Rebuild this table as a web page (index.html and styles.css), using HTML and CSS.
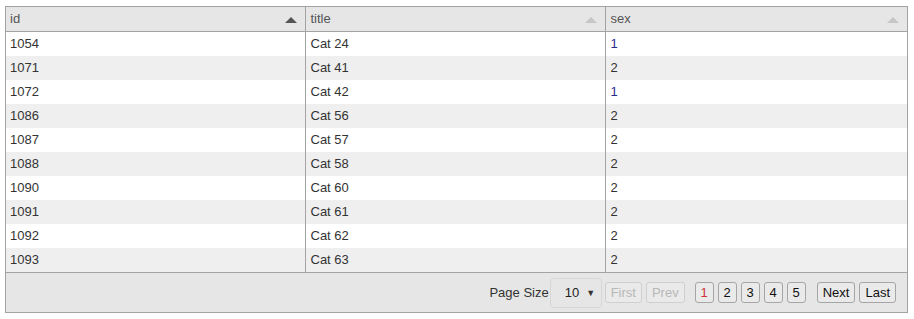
FILE: index.html
```html
<!DOCTYPE html>
<html>
<head>
<meta charset="utf-8">
<link rel="stylesheet" href="styles.css">
</head>
<body>
<div class="grid">
  <table class="tbl">
    <colgroup><col class="c1"><col class="c2"><col class="c3"></colgroup>
    <thead>
      <tr>
        <th><span class="hd">id</span><span class="sort sort-active"></span></th>
        <th><span class="hd">title</span><span class="sort"></span></th>
        <th><span class="hd">sex</span><span class="sort"></span></th>
      </tr>
    </thead>
    <tbody>
      <tr><td>1054</td><td>Cat 24</td><td><span class="one">1</span></td></tr>
      <tr><td>1071</td><td>Cat 41</td><td>2</td></tr>
      <tr><td>1072</td><td>Cat 42</td><td><span class="one">1</span></td></tr>
      <tr><td>1086</td><td>Cat 56</td><td>2</td></tr>
      <tr><td>1087</td><td>Cat 57</td><td>2</td></tr>
      <tr><td>1088</td><td>Cat 58</td><td>2</td></tr>
      <tr><td>1090</td><td>Cat 60</td><td>2</td></tr>
      <tr><td>1091</td><td>Cat 61</td><td>2</td></tr>
      <tr><td>1092</td><td>Cat 62</td><td>2</td></tr>
      <tr><td>1093</td><td>Cat 63</td><td>2</td></tr>
    </tbody>
  </table>
  <div class="pager">
    <span class="ps-label">Page Size</span>
    <span class="ps-select"><span class="ps-val">10</span><span class="caret">&#9660;</span></span>
    <button class="btn btn-first" disabled>First</button>
    <button class="btn btn-prev" disabled>Prev</button>
    <span class="pages">
      <button class="btn page current">1</button>
      <button class="btn page">2</button>
      <button class="btn page">3</button>
      <button class="btn page">4</button>
      <button class="btn page">5</button>
    </span>
    <button class="btn btn-next">Next</button>
    <button class="btn btn-last">Last</button>
  </div>
</div>
</body>
</html>
```
FILE: styles.css
```css
html, body {
  margin: 0;
  padding: 0;
  background: #fff;
}
body {
  padding: 6px 0 0 5px;
  font-family: "Liberation Sans", Arial, sans-serif;
  font-size: 13px;
  color: #333;
}
.grid {
  width: 901px;
  border: 1px solid #a3a3a3;
  background: #e6e6e6;
}
.tbl {
  width: 901px;
  border-collapse: collapse;
  table-layout: fixed;
}
.c1 { width: 299px; }
.c2 { width: 300px; }
.c3 { width: 302px; }
.tbl th {
  height: 24px;
  padding: 0 8px 0 4px;
  text-align: left;
  font-weight: normal;
  color: #555;
  background: #e6e6e6;
  border-bottom: 1px solid #a3a3a3;
  border-right: 1px solid #a3a3a3;
  line-height: 24px;
}
.tbl th:last-child, .tbl td:last-child { border-right: none; }
.tbl th + th, .tbl td + td { padding-left: 5px; }
.hd { display: inline-block; }
.sort {
  float: right;
  width: 0;
  height: 0;
  margin-top: 10px;
  border-left: 6px solid transparent;
  border-right: 6px solid transparent;
  border-bottom: 6px solid #c6c6c6;
}
.sort-active { border-bottom-color: #555; }
.tbl td {
  height: 24px;
  padding: 0 4px;
  line-height: 24px;
  border-right: 1px solid #a3a3a3;
  color: #333;
  white-space: nowrap;
}
.tbl tbody tr:nth-child(odd) td { background: #fff; }
.tbl tbody tr:nth-child(even) td { background: #efefef; }
.tbl tbody tr:last-child td { border-bottom: 1px solid #a3a3a3; }
.one { color: #2a2a90; }
.pager {
  height: 39px;
  display: flex;
  align-items: center;
  justify-content: flex-end;
  padding-right: 11px;
  background: #e6e6e6;
}
.ps-label {
  color: #333;
  margin-right: 1px;
}
.ps-select {
  box-sizing: border-box;
  width: 52px;
  height: 30px;
  border: 1px solid #d6d6d6;
  border-radius: 4px;
  display: flex;
  align-items: center;
  padding-left: 14px;
  color: #222;
  margin-right: 3px;
  font-size: 13px;
}
.ps-val { margin-right: 7px; }
.caret {
  font-size: 9px;
  color: #333;
}
.btn {
  box-sizing: border-box;
  height: 21px;
  padding: 0 5px;
  border: 1px solid #a6a6a6;
  border-radius: 3px;
  background: #eaeaea;
  font-family: "Liberation Sans", Arial, sans-serif;
  font-size: 13px;
  color: #111;
  line-height: 19px;
  margin: 0;
}
.btn[disabled] {
  color: #b8b8b8;
  border-color: #cfcfcf;
}
.btn-first { margin-right: 4px; }
.btn-prev { margin-right: 10px; }
.pages {
  display: flex;
  gap: 4px;
  margin-right: 11px;
}
.page { width: 19px; padding: 0; }
.page.current { color: #d0303a; }
.btn-next { margin-right: 4px; }
```
